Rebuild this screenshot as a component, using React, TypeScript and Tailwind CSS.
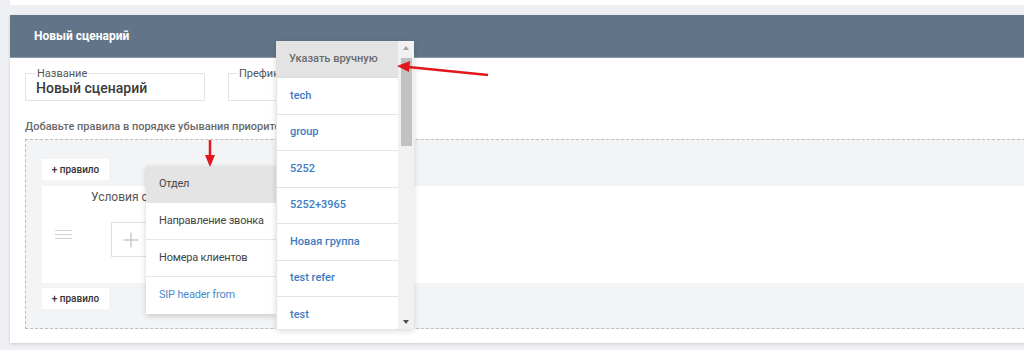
import { Plus } from "lucide-react";

const menuOne = [
  { label: "Отдел", active: true },
  { label: "Направление звонка" },
  { label: "Номера клиентов" },
  { label: "SIP header from", link: true },
];

const menuTwo = ["tech", "group", "5252", "5252+3965", "Новая группа", "test refer", "test"];

function RuleButton() {
  return (
    <button className="w-[67px] h-[21px] bg-white text-[10px] font-medium text-[#333] flex items-center justify-center">
      + правило
    </button>
  );
}

export default function App() {
  return (
    <div
      className="relative w-[1024px] h-[350px] overflow-hidden bg-[#eef0f4]"
      style={{ fontFamily: "Roboto, 'Noto Sans', sans-serif" }}
    >
      {/* strip of the card above */}
      <div className="h-[5px] ml-[10px] bg-white" />

      {/* Scenario card */}
      <div className="mt-[10px] ml-[10px] w-[1030px] bg-white shadow-[0_1px_3px_rgba(0,0,0,0.15)]">
        <div className="h-[43px] bg-[#627487] px-[24px] flex items-center text-white text-[12px] font-bold border-b border-[#8a99a8]">
          Новый сценарий
        </div>

        <div className="px-[15px] pt-[15px] pb-[14px]">
          <div className="flex gap-[23px]">
            <div className="relative w-[180px] h-[28px] border border-[#e4e4e4]">
              <span className="absolute -top-[7px] left-[10px] bg-white px-[1px] text-[11px] leading-[13px] text-[#555]">
                Название
              </span>
              <div className="pl-[10px] pt-[5px] text-[14px] leading-[18px] font-medium text-[#3a3a3a]">
                Новый сценарий
              </div>
            </div>
            <div className="relative w-[180px] h-[28px] border border-[#e4e4e4]">
              <span className="absolute -top-[7px] left-[9px] bg-white px-[1px] text-[11px] leading-[13px] text-[#555]">
                Префикс
              </span>
            </div>
          </div>

          <div className="mt-[19px] text-[11px] leading-[14px] font-medium text-[#6a6a6a]">
            Добавьте правила в порядке убывания приоритета
          </div>

          <div className="mt-[5px] border border-dashed border-[#bdbdbd] bg-[#f3f4f6] pl-[16px] pt-[19px] pb-[19px] flex flex-col gap-[5px]">
            <RuleButton />
            <div className="mt-[1px] h-[97px] bg-white flex">
              <div className="w-[43px] flex items-center justify-center">
                <div className="flex flex-col gap-[3px]">
                  <div className="w-[17px] h-[1px] bg-[#d2d2d2]" />
                  <div className="w-[17px] h-[1px] bg-[#d2d2d2]" />
                  <div className="w-[17px] h-[1px] bg-[#d2d2d2]" />
                </div>
              </div>
              <div className="pl-[6px] pt-[4px]">
                <div className="text-[12px] leading-[15px] text-[#555]">Условия соответствия</div>
                <div className="mt-[17px] ml-[20px] w-[40px] h-[35px] border border-[#e0e0e0] flex items-center justify-center">
                  <Plus className="w-[24px] h-[24px] text-[#c8c8c8]" strokeWidth={1.5} />
                </div>
              </div>
            </div>
            <RuleButton />
          </div>
        </div>
      </div>

      {/* First dropdown */}
      <div className="absolute left-[146px] top-[166px] w-[130px] bg-white shadow-[0_2px_6px_rgba(0,0,0,0.18)]">
        {menuOne.map((item, idx) => (
          <div
            key={idx}
            className={`h-[37px] px-[13px] flex items-center whitespace-nowrap text-[11px] tracking-[-0.2px] ${
              idx < menuOne.length - 1 ? "border-b border-[#e6e6e6]" : ""
            } ${item.active ? "bg-[#e4e4e4]" : ""} ${item.link ? "text-[#4a8bcb]" : "text-[#444]"}`}
          >
            {item.label}
          </div>
        ))}
      </div>

      {/* Second dropdown */}
      <div className="absolute left-[276px] top-[41px] w-[138px] h-[288px] bg-[#ececec] flex shadow-[0_2px_6px_rgba(0,0,0,0.15)] overflow-hidden">
        <div className="w-[122px] flex flex-col">
          <div className="h-[37px] shrink-0 bg-[#e3e3e3] px-[13px] flex items-center text-[11px] font-medium text-[#6a6a6a] border-b border-[#dcdcdc]">
            Указать вручную
          </div>
          {menuTwo.map((item) => (
            <div
              key={item}
              className="h-[36.5px] shrink-0 bg-white px-[13px] flex items-center text-[11px] font-medium text-[#3d7cc4] border-b border-l border-[#e3e3e3]"
            >
              {item}
            </div>
          ))}
        </div>
        <div className="w-[16px] bg-[#f1f1f1] flex flex-col items-center">
          <svg width="16" height="14" viewBox="0 0 16 14" className="shrink-0">
            <path d="M5 9 L8 5 L11 9 Z" fill="#a3a3a3" />
          </svg>
          <div className="w-[11px] h-[88px] bg-[#c1c1c1] mt-[3px]" />
          <div className="flex-1" />
          <svg width="16" height="14" viewBox="0 0 16 14" className="shrink-0">
            <path d="M5 5 L11 5 L8 9 Z" fill="#505050" />
          </svg>
        </div>
      </div>

      {/* Red pointers */}
      <svg className="absolute left-0 top-0 pointer-events-none" width="1024" height="350">
        <line x1="488" y1="75" x2="408" y2="67" stroke="#e3161b" strokeWidth="2.5" />
        <path d="M397 66 L410 61 L409 72 Z" fill="#e3161b" />
        <line x1="210" y1="140" x2="210" y2="157" stroke="#e3161b" strokeWidth="2.5" />
        <path d="M205 155 L215 155 L210 167 Z" fill="#e3161b" />
      </svg>
    </div>
  );
}
